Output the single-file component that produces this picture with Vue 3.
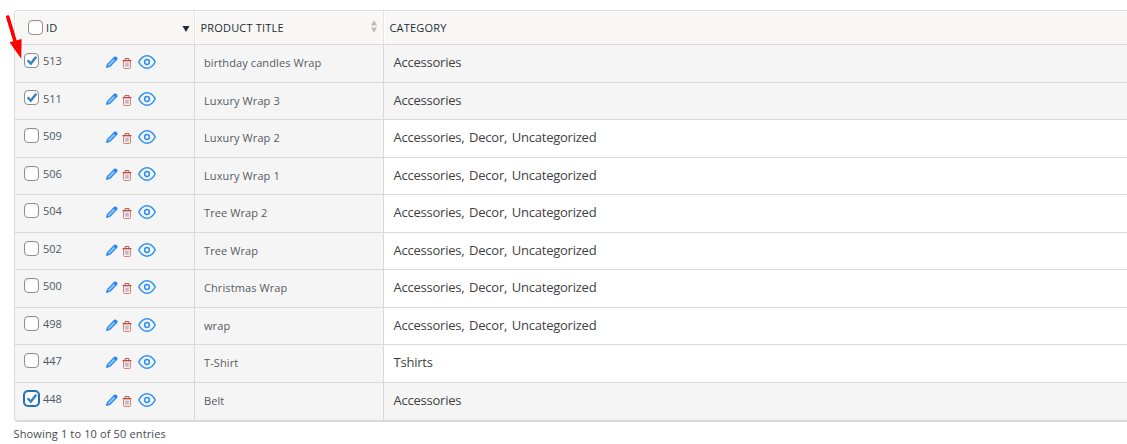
<script setup>
const rows = [
  { id: 513, title: 'birthday candles Wrap', category: 'Accessories', checked: true },
  { id: 511, title: 'Luxury Wrap 3', category: 'Accessories', checked: true },
  { id: 509, title: 'Luxury Wrap 2', category: 'Accessories, Decor, Uncategorized' },
  { id: 506, title: 'Luxury Wrap 1', category: 'Accessories, Decor, Uncategorized' },
  { id: 504, title: 'Tree Wrap 2', category: 'Accessories, Decor, Uncategorized' },
  { id: 502, title: 'Tree Wrap', category: 'Accessories, Decor, Uncategorized' },
  { id: 500, title: 'Christmas Wrap', category: 'Accessories, Decor, Uncategorized' },
  { id: 498, title: 'wrap', category: 'Accessories, Decor, Uncategorized' },
  { id: 447, title: 'T-Shirt', category: 'Tshirts' },
  { id: 448, title: 'Belt', category: 'Accessories', checked: true, focused: true },
]
</script>

<template>
  <main class="page">
    <section class="table">
      <header class="row head">
        <div class="cell id-cell">
          <span class="box"></span><span class="label">ID</span>
          <svg class="desc" width="8" height="6" viewBox="0 0 8 6"><path d="M.5 0h7L4 6z" fill="#222d38" /></svg>
        </div>
        <div class="cell title-cell">
          <span class="label">PRODUCT TITLE</span>
          <svg class="sort" width="6" height="13" viewBox="0 0 6 13"><path d="M3 0 6 5.5H0zM0 7.5h6L3 13z" fill="#bdbdbd" /></svg>
        </div>
        <div class="cell cat-cell"><span class="label">CATEGORY</span></div>
      </header>
      <div v-for="row in rows" :key="row.id" class="row item" :class="{ selected: row.checked }">
        <div class="cell id-cell">
          <span class="box" :class="{ focused: row.focused }">
            <svg v-if="row.checked" width="12" height="11" viewBox="0 0 12 11"><path d="M1.6 5.2 4.8 8.6 10.3 1.7" fill="none" stroke="#3582c4" stroke-width="2.4" /></svg>
          </span>
          <span class="number">{{ row.id }}</span>
          <span class="actions">
            <svg class="pencil" width="12" height="12" viewBox="0 0 12 12">
              <path d="M.7 11.3 1.5 8.3 8.6 1.2 10.8 3.4 3.7 10.5z" fill="#8fc2f8" stroke="#2386f2" stroke-width="1.15" stroke-linejoin="round" />
              <path d="M7.4 2.4 9.1.7Q9.8.2 10.5.9L11.1 1.5Q11.8 2.2 11.3 2.9L9.6 4.6zM.5 11.5 1.3 8.8 3.2 10.7z" fill="#2386f2" />
            </svg>
            <svg class="trash" width="10" height="11" viewBox="0 0 10 11">
              <path d="M1.5 3h7v6.6q0 .9-.9.9H2.4q-.9 0-.9-.9z" fill="#f6e8e4" stroke="#cf8477" />
              <path d="M.5 2.5h9M3 2V.6h4V2" fill="none" stroke="#bd5044" />
              <path d="M3.3 4.7h3.4v3.8H3.3z" fill="#c5b4ca" />
            </svg>
            <svg class="eye" width="18" height="14" viewBox="0 0 18 14">
              <path d="M.8 7Q4 .8 9 .8T17.2 7Q14 13.2 9 13.2T.8 7z" fill="none" stroke="#2b90f5" stroke-width="1.5" stroke-linejoin="round" />
              <circle cx="9" cy="7" r="2.4" fill="none" stroke="#2b90f5" stroke-width="1.5" />
            </svg>
          </span>
        </div>
        <div class="cell title-cell"><span class="title">{{ row.title }}</span></div>
        <div class="cell cat-cell"><span class="category">{{ row.category }}</span></div>
      </div>
    </section>
    <footer class="summary">Showing 1 to 10 of 50 entries</footer>
    <svg class="arrow" width="18" height="46" viewBox="0 0 18 46">
      <path d="M1.8 2 9 26" stroke="#f00" stroke-width="3.6" stroke-linecap="round" />
      <path d="M3.6 27.3 15.6 24 15.2 43.8z" fill="#f00" />
    </svg>
  </main>
</template>

<style>
body { background: #fff; overflow: hidden; }
</style>

<style scoped>
* { box-sizing: border-box; }
.page { position: relative; width: 1127px; height: 444px; padding: 10px 0 0 14px; overflow: hidden; font-family: "Open Sans", "Noto Sans", sans-serif; }
.table { height: 412px; width: 1120px; border: 1px solid #d9d9db; border-bottom-width: 2px; border-radius: 4px; overflow: hidden; }
.row { display: grid; grid-template-columns: 180px 189px 1fr; }
.head { height: 34px; border-bottom: 1px solid #d9d9db; background: #f8f7f5; box-shadow: inset 0 1px #fff; }
.item { height: 37.56px; border-bottom: 1px solid #d9d9db; }
.item:last-child { border-bottom: 0; }
.cell { display: flex; align-items: flex-start; border-right: 1px solid #d9d9db; background: #f5f5f5; min-width: 0; }
.cat-cell { border-right: 0; background: #fff; }
.selected .cat-cell { background: #f5f5f5; }
.head .cell { background: transparent; border-color: #e5e5e5; box-shadow: inset 1px 0 #fff; }
.box { flex: none; display: flex; align-items: center; justify-content: center; width: 15px; height: 15px; margin: 7.9px 0 0 9px; border: 1px solid #8c8f94; border-radius: 4px; background: #fff; box-shadow: inset 0 1px 2px #0001; }
.box.focused { border-color: #2271b1; box-shadow: 0 0 0 1px #2271b1; }
.head .box { margin: 9px 0 0 13px; }
.label { color: #222d38; font-size: 11px; line-height: 16px; font-weight: 500; letter-spacing: .18px; white-space: nowrap; }
.head .id-cell .label { margin: 9px 0 0 3px; }
.title-cell .label, .cat-cell .label { margin: 9px 0 0 5.5px; }
.desc { margin: 15px 4.5px 0 auto; }
.sort { margin: 9px 6.5px 0 auto; }
.number { width: 24px; margin: 8px 0 0 4px; color: #50575e; font-size: 11px; line-height: 16px; }
.actions { display: flex; margin: 9.8px 0 0 38.5px; }
.trash { margin: 3px 0 0 4.5px; }
.eye { margin-left: 6px; }
.pencil { margin-top: 1px; }
.title { margin: 10px 0 0 9px; color: #555b62; font-size: 11px; line-height: 16px; letter-spacing: .1px; white-space: nowrap; }
.category { margin: 8px 0 0 9.5px; color: #3f3f42; font-size: 13px; line-height: 18px; letter-spacing: -.23px; word-spacing: 1.5px; white-space: nowrap; }
.summary { margin: 4px 0 0 -.5px; color: #444a50; font-size: 11px; line-height: 16px; letter-spacing: .14px; }
.arrow { position: absolute; left: 6px; top: 15px; }
</style>
